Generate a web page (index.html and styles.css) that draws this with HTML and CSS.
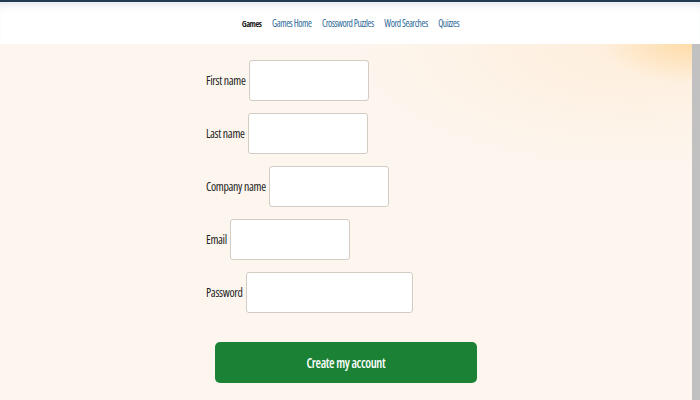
FILE: index.html
```html
<!DOCTYPE html>
<html lang="en">
<head>
<meta charset="utf-8">
<title>Create account</title>
<link rel="stylesheet" href="styles.css">
</head>
<body>
<header class="topbar">
  <nav class="nav">
    <span class="nav-title">Games</span>
    <a class="nav-link" href="#">Games Home</a>
    <a class="nav-link" href="#">Crossword Puzzles</a>
    <a class="nav-link" href="#">Word Searches</a>
    <a class="nav-link" href="#">Quizzes</a>
  </nav>
</header>
<div class="frame">
  <main class="content">
    <form class="signup">
      <div class="row"><label class="lbl">First name</label><input class="field" type="text"></div>
      <div class="row"><label class="lbl">Last name</label><input class="field" type="text"></div>
      <div class="row"><label class="lbl">Company name</label><input class="field" type="text"></div>
      <div class="row"><label class="lbl">Email</label><input class="field" type="email"></div>
      <div class="row"><label class="lbl">Password</label><input class="field field-wide" type="password"></div>
      <button class="submit" type="button"><span class="submit-text">Create my account</span></button>
    </form>
  </main>
  <div class="scrollbar"></div>
</div>
</body>
</html>
```
FILE: styles.css
```css
* { box-sizing: border-box; }
html, body { margin: 0; padding: 0; height: 100%; }
body {
  font-family: "Open Sans", "Noto Sans", sans-serif;
  font-stretch: 75%;
  background: #fdf6ef;
  display: flex;
  flex-direction: column;
  overflow: hidden;
}
.topbar {
  height: 44px;
  background: #ffffff;
  border-top: 2px solid #243a4e;
  box-shadow: inset 0 8px 8px -6px rgba(120, 140, 170, 0.25);
  display: flex;
  align-items: center;
  justify-content: center;
  flex-shrink: 0;
}
.nav {
  display: flex;
  gap: 10.5px;
  font-size: 9.5px;
  letter-spacing: -0.45px;
  align-items: center;
  padding-left: 1px;
}
.nav-title, .nav-link { display: inline-block; transform: scaleY(1.12); }
.nav-title { color: #1f1f1f; font-weight: bold; font-size: 8.5px; letter-spacing: -0.5px; }
.nav-link { color: #2d6a98; text-decoration: none; }
.frame { flex: 1; display: flex; }
.content {
  flex: 1;
  background:
    radial-gradient(ellipse 90px 40px at 100% 0%, rgba(255, 214, 150, 0.75), rgba(255, 214, 150, 0) 100%),
    radial-gradient(ellipse 300px 130px at 92% 0%, rgba(255, 230, 200, 0.5), rgba(255, 230, 200, 0) 100%),
    #fdf6ef;
  display: flex;
  justify-content: center;
  padding-top: 16px;
}
.signup { width: 280px; }
.row {
  height: 41px;
  margin-bottom: 12px;
  display: flex;
  align-items: center;
  gap: 3px;
}
.lbl {
  display: inline-block;
  font-size: 11.8px;
  letter-spacing: -0.3px;
  color: #222222;
  transform: translateY(-1px) scaleY(1.06);
}
.field {
  width: 120px;
  height: 41px;
  border: 1px solid #d3ccc4;
  border-radius: 3px;
  background: #fff;
}
.field-wide { width: 167px; }
.submit {
  display: block;
  width: 262px;
  height: 41px;
  margin: 29px auto 0;
  background: #1b8135;
  color: #fff;
  border: none;
  border-radius: 5px;
  font-family: inherit;
  font-stretch: 75%;
  font-size: 14px;
  font-weight: 600;
  letter-spacing: -0.4px;
}
.submit-text { display: inline-block; transform: scaleX(0.9); }
.scrollbar { width: 8px; background: #c1c1c1; flex-shrink: 0; }
```
